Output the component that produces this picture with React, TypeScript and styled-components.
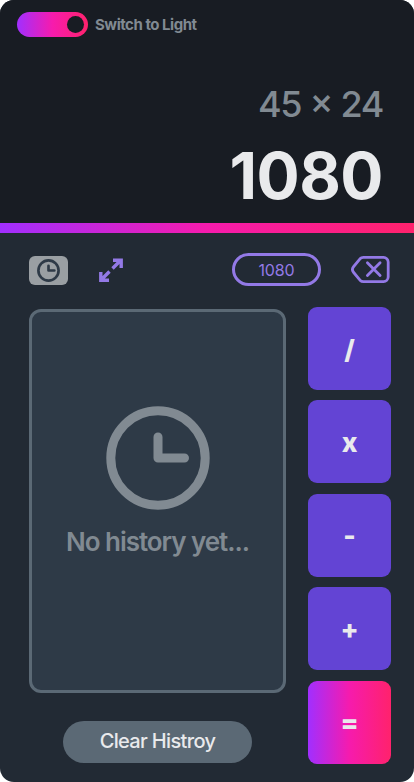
import React from 'react';
import styled, { createGlobalStyle, css } from 'styled-components';

const GlobalStyle = createGlobalStyle`
  *, *::before, *::after { box-sizing: border-box; }
  body { margin: 0; background: #fff; font-family: Inter, sans-serif; }
  button { font-family: inherit; border: 0; padding: 0; margin: 0; cursor: pointer; }
`;

const gradient = 'linear-gradient(90deg, #a12fff 0%, #f61bad 50%, #ff226c 100%)';

const Calculator = styled.main`
  display: flex;
  flex-direction: column;
  width: 414px;
  height: 782px;
  overflow: hidden;
  border-radius: 14px;
  background: #222a34;
`;

const Display = styled.header`
  display: flex;
  flex-direction: column;
  height: 223px;
  padding: 12px 31px 0 17px;
  background: #181c23;
`;

const ThemeRow = styled.div`
  display: flex;
  align-items: center;
  gap: 7px;
  height: 25px;
`;

const Toggle = styled.button`
  display: flex;
  align-items: center;
  justify-content: flex-end;
  width: 71px;
  height: 25px;
  padding-right: 4px;
  border-radius: 13px;
  background: ${gradient};
`;

const Knob = styled.span`
  width: 17px;
  height: 17px;
  border-radius: 50%;
  background: #181c23;
`;

const ThemeLabel = styled.span`
  color: #818a92;
  font-size: 15px;
  font-weight: 700;
  letter-spacing: -0.47px;
`;

const Expression = styled.div`
  margin-top: 45px;
  color: #818a92;
  font-size: 36px;
  font-weight: 500;
  font-feature-settings: 'case';
  line-height: 44px;
  letter-spacing: -1.35px;
  text-align: right;
`;

const Result = styled.div`
  margin-top: 18px;
  color: #e9eaec;
  font-size: 64px;
  font-weight: 700;
  line-height: 64px;
  letter-spacing: -0.5px;
  text-align: right;
`;

const Strip = styled.div`
  height: 10px;
  background: ${gradient};
`;

const Toolbar = styled.div`
  display: flex;
  align-items: center;
  height: 74px;
  padding: 0 24px 0 29px;
`;

const HistoryButton = styled.button`
  display: flex;
  align-items: center;
  justify-content: center;
  width: 39px;
  height: 29px;
  border-radius: 6px;
  background: #9a9fa3;
`;

const IconButton = styled.button`
  display: flex;
  background: none;
`;

const ExpandButton = styled(IconButton)`
  margin-left: 31px;
`;

const MemoryPill = styled.div`
  display: flex;
  align-items: center;
  justify-content: center;
  width: 89px;
  height: 33px;
  margin: -1px 30px 0 auto;
  border: 3px solid #9379e6;
  border-radius: 17px;
  color: #9379e6;
  font-size: 16px;
  letter-spacing: -0.15px;
`;

const Body = styled.div`
  display: flex;
  gap: 22px;
  padding: 0 23px 0 29px;
`;

const HistoryColumn = styled.section`
  display: flex;
  flex-direction: column;
  align-items: center;
  width: 257px;
  padding-top: 2px;
`;

const HistoryPanel = styled.div`
  display: flex;
  flex-direction: column;
  align-items: center;
  width: 257px;
  height: 384px;
  padding-top: 94px;
  border: 3px solid #5b6975;
  border-radius: 12px;
  background: #2e3a47;
`;

const EmptyText = styled.p`
  margin: 16px 0 0;
  color: #818a92;
  font-size: 26px;
  font-weight: 600;
  line-height: 32px;
  letter-spacing: -1.05px;
`;

const ClearButton = styled.button`
  width: 189px;
  height: 42px;
  margin: 28px 0 0;
  padding-bottom: 2px;
  border-radius: 21px;
  background: #5b6975;
  color: #e9eaec;
  font-size: 20px;
  font-weight: 550;
  letter-spacing: -0.65px;
`;

const Keys = styled.div`
  display: flex;
  flex-direction: column;
  gap: 10.4px;
`;

const Key = styled.button<{ $primary?: boolean }>`
  width: 83px;
  height: 83px;
  border-radius: 9px;
  background: #6344d4;
  color: #e9eaec;
  font-size: 26.5px;
  font-weight: 800;
  ${({ $primary }) => $primary && css`background: ${gradient};`}
`;

function Clock({ size, color, stroke = 9 }: { size: number; color: string; stroke?: number }) {
  return (
    <svg width={size} height={size} viewBox="0 0 104 104" fill="none" stroke={color}
      strokeWidth={stroke} strokeLinecap="round" strokeLinejoin="round">
      <circle cx="52" cy="52" r={51.7 - stroke / 2} />
      <path d="M52 31V52H78.5" />
    </svg>
  );
}

function ExpandIcon() {
  return (
    <svg width="24" height="24" viewBox="0 0 24 24" fill="none" stroke="#9379e6" strokeWidth="3.4">
      <path d="M14 2.2H22.2V10M22 2L13.5 10.5" />
      <path d="M10 22.2H1.8V14M2 22L10.5 13.5" />
    </svg>
  );
}

function BackspaceIcon() {
  return (
    <svg width="39" height="28" viewBox="0 0 39 28" fill="none" stroke="#9379e6"
      strokeWidth="2.8" strokeLinejoin="round" strokeLinecap="round">
      <path d="M12.5 1.4H32.5A5 5 0 0 1 37.2 6V21A5 5 0 0 1 32.5 25.7H12.5C11 25.7 10 25.2 9 24.2L2.7 16.5C1 14.5 1 12.5 2.7 10.5L9 2.8C10 1.7 11 1.4 12.5 1.4Z" />
      <path d="M16.4 6.7L29.1 19.5M29.1 6.7L16.4 19.5" />
    </svg>
  );
}

export default function App() {
  return (
    <>
      <GlobalStyle />
      <Calculator>
        <Display>
          <ThemeRow>
            <Toggle aria-label="Theme"><Knob /></Toggle>
            <ThemeLabel>Switch to Light</ThemeLabel>
          </ThemeRow>
          <Expression>45 × 24</Expression>
          <Result>1080</Result>
        </Display>
        <Strip />
        <Toolbar>
          <HistoryButton aria-label="History"><Clock size={23} color="#2e3a47" stroke={12} /></HistoryButton>
          <ExpandButton aria-label="Expand"><ExpandIcon /></ExpandButton>
          <MemoryPill>1080</MemoryPill>
          <IconButton aria-label="Delete"><BackspaceIcon /></IconButton>
        </Toolbar>
        <Body>
          <HistoryColumn>
            <HistoryPanel>
              <Clock size={104} color="#818a92" />
              <EmptyText>No history yet...</EmptyText>
            </HistoryPanel>
            <ClearButton>Clear Histroy</ClearButton>
          </HistoryColumn>
          <Keys>
            {['/', 'x', '-', '+'].map((label) => <Key key={label}>{label}</Key>)}
            <Key $primary>=</Key>
          </Keys>
        </Body>
      </Calculator>
    </>
  );
}
